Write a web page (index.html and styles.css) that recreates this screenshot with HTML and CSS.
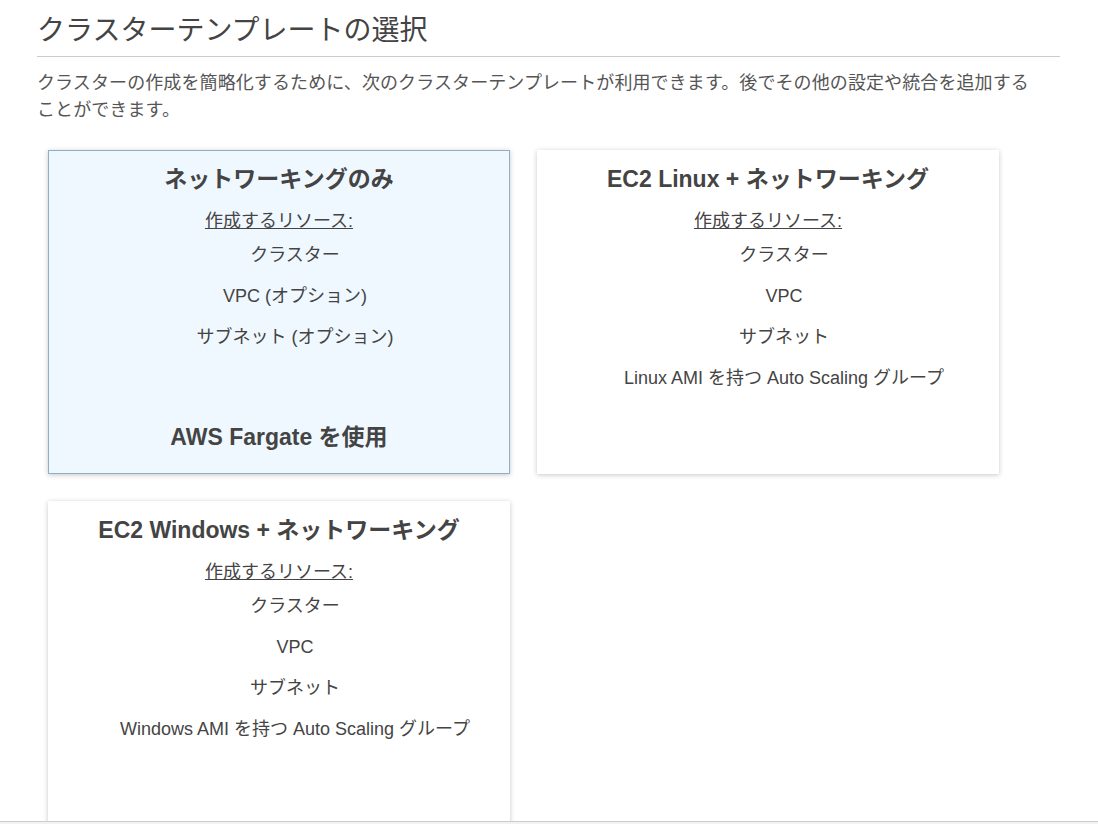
FILE: index.html
```html
<!DOCTYPE html>
<html lang="ja">
<head>
    <meta charset="UTF-8">
    <meta name="viewport" content="width=device-width, initial-scale=1.0">
    <title>クラスターテンプレートの選択</title>
    <link rel="stylesheet" href="styles.css">
</head>
<body>
    <div class="page">
        <h1 class="page-title">クラスターテンプレートの選択</h1>
        <p class="intro">クラスターの作成を簡略化するために、次のクラスターテンプレートが利用できます。後でその他の設定や統合を追加することができます。</p>

        <div class="templates">
            <div class="template-card selected">
                <h3 class="card-title">ネットワーキングのみ</h3>
                <div class="resources-label">作成するリソース:</div>
                <ul class="resource-list">
                    <li>クラスター</li>
                    <li>VPC (オプション)</li>
                    <li>サブネット (オプション)</li>
                </ul>
                <div class="card-footer">AWS Fargate を使用</div>
            </div>

            <div class="template-card">
                <h3 class="card-title">EC2 Linux + ネットワーキング</h3>
                <div class="resources-label">作成するリソース:</div>
                <ul class="resource-list">
                    <li>クラスター</li>
                    <li>VPC</li>
                    <li>サブネット</li>
                    <li>Linux AMI を持つ Auto Scaling グループ</li>
                </ul>
            </div>

            <div class="template-card">
                <h3 class="card-title">EC2 Windows + ネットワーキング</h3>
                <div class="resources-label">作成するリソース:</div>
                <ul class="resource-list">
                    <li>クラスター</li>
                    <li>VPC</li>
                    <li>サブネット</li>
                    <li>Windows AMI を持つ Auto Scaling グループ</li>
                </ul>
            </div>
        </div>
    </div>
    <div class="bottom-bar"></div>
</body>
</html>
```

FILE: styles.css
```css
body {
    font-family: 'Liberation Sans', 'Noto Sans CJK JP', sans-serif;
    margin: 0;
    padding: 0;
    background: #fff;
    color: #444;
}

.page {
    padding: 0 38px 0 37px;
}

.page-title {
    font-family: 'Noto Sans CJK JP', sans-serif;
    font-size: 28px;
    font-weight: 400;
    line-height: 34px;
    color: #444;
    margin: 0;
    padding: 11px 0 11px;
    border-bottom: 1px solid #ccc;
}

.intro {
    font-family: 'Noto Sans CJK JP', sans-serif;
    font-size: 18px;
    line-height: 27px;
    letter-spacing: 0.1px;
    color: #555;
    margin: 11px 0 0;
    max-width: 1005px;
}

.templates {
    display: grid;
    grid-template-columns: 462px 462px;
    gap: 27px;
    margin: 28px 0 0 11px;
}

.template-card {
    box-sizing: border-box;
    height: 324px;
    background: #fff;
    border: 1px solid transparent;
    box-shadow: 0 1px 5px rgba(0, 0, 0, 0.22);
    display: flex;
    flex-direction: column;
    align-items: center;
    text-align: center;
    padding: 14px 10px 22px;
}

.template-card.selected {
    background: #f0f8ff;
    border-color: #92aec4;
}

.card-title {
    font-size: 23px;
    font-weight: bold;
    line-height: 28px;
    color: #444;
    margin: 0;
}

.resources-label {
    font-size: 18px;
    line-height: 26px;
    margin-top: 15px;
    text-decoration: underline;
    color: #444;
}

.resource-list {
    list-style: none;
    margin: 8px 0 0;
    padding: 0 0 0 32px;
    font-size: 18px;
    line-height: 26px;
    color: #444;
}

.resource-list li {
    margin-bottom: 15px;
}

.card-footer {
    margin-top: auto;
    font-size: 23px;
    font-weight: bold;
    line-height: 28px;
    color: #444;
}

.bottom-bar {
    position: fixed;
    left: 0;
    right: 0;
    bottom: 0;
    height: 2px;
    background: #f2f2f2;
    border-top: 1px solid #ccc;
}
```
